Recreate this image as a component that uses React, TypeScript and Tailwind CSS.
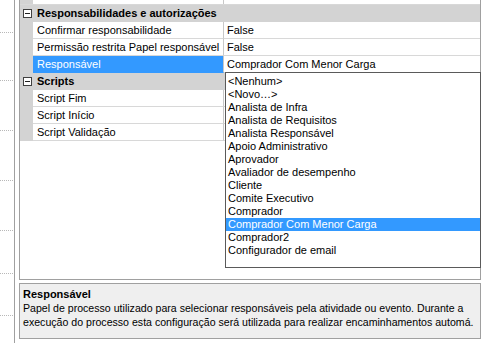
const font = { fontFamily: '"Liberation Sans", Arial, sans-serif' }

type Row =
  | { kind: 'cat'; label: string }
  | { kind: 'prop'; label: string; value?: string; selected?: boolean }

const rows: Row[] = [
  { kind: 'cat', label: 'Responsabilidades e autorizações' },
  { kind: 'prop', label: 'Confirmar responsabilidade', value: 'False' },
  { kind: 'prop', label: 'Permissão restrita Papel responsável', value: 'False' },
  { kind: 'prop', label: 'Responsável', value: 'Comprador Com Menor Carga', selected: true },
  { kind: 'cat', label: 'Scripts' },
  { kind: 'prop', label: 'Script Fim' },
  { kind: 'prop', label: 'Script Início' },
  { kind: 'prop', label: 'Script Validação' },
]

const options = [
  '<Nenhum>',
  '<Novo…>',
  'Analista de Infra',
  'Analista de Requisitos',
  'Analista Responsável',
  'Apoio Administrativo',
  'Aprovador',
  'Avaliador de desempenho',
  'Cliente',
  'Comite Executivo',
  'Comprador',
  'Comprador Com Menor Carga',
  'Comprador2',
  'Configurador de email',
]

function MinusBox() {
  return (
    <div className="w-[9px] h-[9px] border border-[#404040] bg-white flex items-center justify-center">
      <div className="w-[5px] h-px bg-[#202020]" />
    </div>
  )
}

export default function App() {
  const dots = [32, 80, 130, 180, 230, 273, 315]
  return (
    <div className="w-[483px] h-[343px] bg-white flex overflow-hidden text-[11px] text-black" style={font}>
      {/* left strip with dotted guides */}
      <div className="w-[14px] relative shrink-0">
        {dots.map((y) => (
          <div key={y} className="absolute left-0 w-[13px] border-t border-dotted border-[#b8b8b8]" style={{ top: y }} />
        ))}
      </div>
      <div className="flex-1 border-l border-[#a0a0a0] pl-[4px] pr-[2px] flex flex-col">
        {/* property grid */}
        <div className="relative h-[280px] border-x border-b border-[#a0a0a0] bg-white">
          <div className="flex h-[5px] border-b border-[#d8d8d8]">
            <div className="w-[13px] bg-[#d3d3d3]" />
            <div className="w-[191px] border-r border-[#c8c8c8]" />
            <div className="flex-1" />
          </div>
          {rows.map((r) =>
            r.kind === 'cat' ? (
              <div key={r.label} className="flex h-[17px] bg-[#d3d3d3] items-center border-b border-[#d3d3d3]">
                <div className="w-[13px] flex items-center justify-center pl-[1px]">
                  <MinusBox />
                </div>
                <div className="pl-[4px] font-bold text-[11px]">{r.label}</div>
              </div>
            ) : (
              <div key={r.label} className="flex h-[17px]">
                <div className="w-[13px] bg-[#d3d3d3]" />
                <div
                  className={`w-[191px] border-r border-[#c8c8c8] border-b pl-[4px] flex items-center ${
                    r.selected ? 'bg-[#3399ff] text-white border-b-[#3399ff]' : 'border-b-[#d8d8d8]'
                  }`}
                >
                  {r.label}
                </div>
                <div className="flex-1 border-b border-[#d8d8d8] pl-[3px] flex items-center">{r.value}</div>
              </div>
            )
          )}

          {/* dropdown list */}
          <div className="absolute left-[205px] top-[72px] w-[256px] h-[196px] border border-[#5a5a5a] bg-white pt-[2px]">
            {options.map((o) => (
              <div
                key={o}
                className={`h-[13px] leading-[13px] pl-[2px] whitespace-nowrap ${
                  o === 'Comprador Com Menor Carga' ? 'bg-[#3399ff] text-white' : ''
                }`}
              >
                {o}
              </div>
            ))}
          </div>
        </div>

        {/* description */}
        <div className="mt-[3px] h-[56px] border border-[#a0a0a0] bg-[#efefef] px-[3px] pt-[3px]">
          <div className="font-bold leading-[14px]">Responsável</div>
          <div className="text-[10.6px] leading-[14px] whitespace-nowrap">
            Papel de processo utilizado para selecionar responsáveis pela atividade ou evento. Durante a
          </div>
          <div className="text-[10.6px] leading-[14px] whitespace-nowrap">
            execução do processo esta configuração será utilizada para realizar encaminhamentos automá.
          </div>
        </div>
      </div>
    </div>
  )
}
